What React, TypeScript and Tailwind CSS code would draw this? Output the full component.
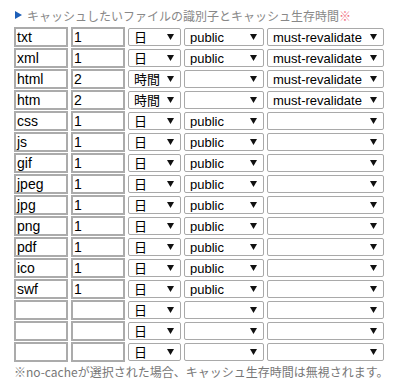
type Row = { ext: string; num: string; unit: string; scope: string; rule: string };

const rows: Row[] = [
  { ext: 'txt', num: '1', unit: '日', scope: 'public', rule: 'must-revalidate' },
  { ext: 'xml', num: '1', unit: '日', scope: 'public', rule: 'must-revalidate' },
  { ext: 'html', num: '2', unit: '時間', scope: '', rule: 'must-revalidate' },
  { ext: 'htm', num: '2', unit: '時間', scope: '', rule: 'must-revalidate' },
  { ext: 'css', num: '1', unit: '日', scope: 'public', rule: '' },
  { ext: 'js', num: '1', unit: '日', scope: 'public', rule: '' },
  { ext: 'gif', num: '1', unit: '日', scope: 'public', rule: '' },
  { ext: 'jpeg', num: '1', unit: '日', scope: 'public', rule: '' },
  { ext: 'jpg', num: '1', unit: '日', scope: 'public', rule: '' },
  { ext: 'png', num: '1', unit: '日', scope: 'public', rule: '' },
  { ext: 'pdf', num: '1', unit: '日', scope: 'public', rule: '' },
  { ext: 'ico', num: '1', unit: '日', scope: 'public', rule: '' },
  { ext: 'swf', num: '1', unit: '日', scope: 'public', rule: '' },
  { ext: '', num: '', unit: '日', scope: '', rule: '' },
  { ext: '', num: '', unit: '日', scope: '', rule: '' },
  { ext: '', num: '', unit: '日', scope: '', rule: '' },
];

function TextBox({ value }: { value: string }) {
  return (
    <div className="w-[54px] h-[20px] border-2 border-[#ababab] bg-white flex items-center pl-[1px] text-[14px] text-black leading-none">
      {value}
    </div>
  );
}

function FakeSelect({ value, width }: { value: string; width: string }) {
  return (
    <div className={`${width} h-[18px] border border-[#a9a9a9] rounded-[2px] bg-white flex items-center justify-between pl-[5px] pr-[6px] text-[13px] text-black leading-none`}>
      <span className="truncate">{value}</span>
      <svg width="7" height="6" viewBox="0 0 7 6" className="shrink-0">
        <path d="M0 0 H7 L3.5 6 Z" fill="#111" />
      </svg>
    </div>
  );
}

export default function App() {
  return (
    <div
      className="w-[397px] h-[381px] bg-white pl-[14px] pt-[5px]"
      style={{ fontFamily: '"Liberation Sans", Arial, "Noto Sans CJK JP", sans-serif' }}
    >
      {/* 見出し */}
      <div className="flex items-start h-[22px] pt-[2px] text-[12px] text-[#888] leading-[18px]" style={{ fontFamily: '"Noto Sans CJK JP", sans-serif' }}>
        <svg width="7" height="8" viewBox="0 0 7 8" className="mt-[4px] ml-[1px] mr-[5px] shrink-0">
          <path d="M0 0 L7 4 L0 8 Z" fill="#1d5fb8" />
        </svg>
        <span>
          キャッシュしたいファイルの識別子とキャッシュ生存時間<span className="text-[#f07080]">※</span>
        </span>
      </div>

      {/* 入力テーブル */}
      <div className="flex flex-col gap-px">
        {rows.map((r, i) => (
          <div key={i} className="flex items-center gap-[3px] h-[20px]">
            <TextBox value={r.ext} />
            <TextBox value={r.num} />
            <FakeSelect value={r.unit} width="w-[53px]" />
            <FakeSelect value={r.scope} width="w-[80px]" />
            <FakeSelect value={r.rule} width="w-[117px]" />
          </div>
        ))}
      </div>

      <p className="text-[12px] text-[#777] leading-[16px] mt-[2px]" style={{ fontFamily: '"Noto Sans CJK JP", sans-serif' }}>
        ※no-cacheが選択された場合、キャッシュ生存時間は無視されます。
      </p>
    </div>
  );
}
